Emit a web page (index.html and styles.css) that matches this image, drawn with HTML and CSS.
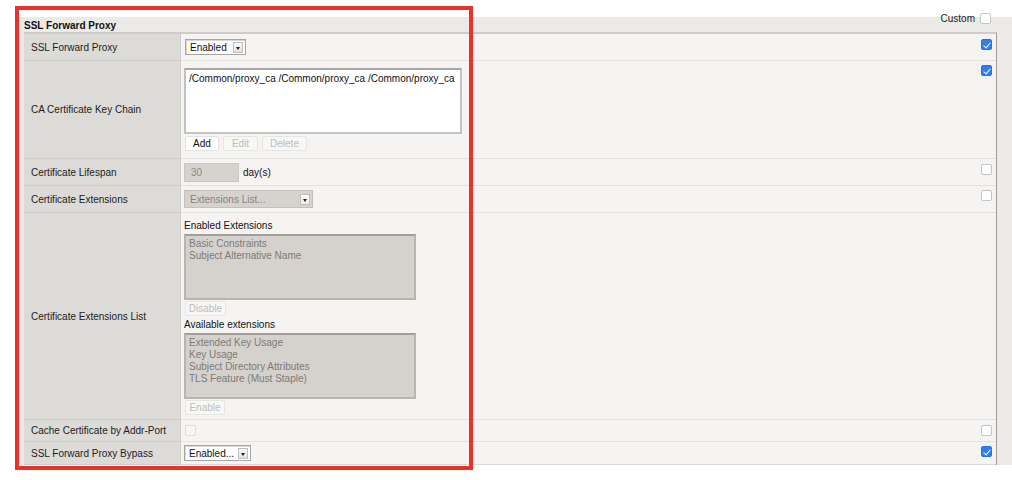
FILE: index.html
```html
<!DOCTYPE html>
<html>
<head>
<meta charset="utf-8">
<link rel="stylesheet" href="styles.css">
</head>
<body>
<div class="page">
  <div class="panel">
    <div class="panel-head">
      <span class="title">SSL Forward Proxy</span>
      <span class="custom">Custom <span class="cb"></span></span>
    </div>
    <div class="table">
      <div class="row r1">
        <div class="label">SSL Forward Proxy</div>
        <div class="value mid"><div class="select w60"><span class="txt">Enabled</span><span class="arrow"></span></div></div>
        <div class="chk"><span class="cb on"></span></div>
      </div>
      <div class="row r2">
        <div class="label">CA Certificate Key Chain</div>
        <div class="value stack pad-chain">
          <div class="textarea">/Common/proxy_ca /Common/proxy_ca /Common/proxy_ca</div>
          <div class="btns">
            <span class="btn b-add">Add</span>
            <span class="btn dis b-edit">Edit</span>
            <span class="btn dis b-del">Delete</span>
          </div>
        </div>
        <div class="chk"><span class="cb on"></span></div>
      </div>
      <div class="row r3">
        <div class="label">Certificate Lifespan</div>
        <div class="value mid"><span class="input dis">30</span><span class="unit">day(s)</span></div>
        <div class="chk"><span class="cb"></span></div>
      </div>
      <div class="row r4">
        <div class="label">Certificate Extensions</div>
        <div class="value mid"><div class="select w128 dis"><span class="txt">Extensions List...</span><span class="arrow"></span></div></div>
        <div class="chk"><span class="cb"></span></div>
      </div>
      <div class="row r5">
        <div class="label">Certificate Extensions List</div>
        <div class="value stack pad-ext">
          <div class="cap">Enabled Extensions</div>
          <div class="listbox">
            <div>Basic Constraints</div>
            <div>Subject Alternative Name</div>
          </div>
          <div class="btns"><span class="btn dis b-dis">Disable</span></div>
          <div class="cap cap2">Available extensions</div>
          <div class="listbox">
            <div>Extended Key Usage</div>
            <div>Key Usage</div>
            <div>Subject Directory Attributes</div>
            <div>TLS Feature (Must Staple)</div>
          </div>
          <div class="btns"><span class="btn dis b-en">Enable</span></div>
        </div>
        <div class="chk"></div>
      </div>
      <div class="row r6">
        <div class="label">Cache Certificate by Addr-Port</div>
        <div class="value mid"><span class="cb dis"></span></div>
        <div class="chk"><span class="cb"></span></div>
      </div>
      <div class="row r7">
        <div class="label">SSL Forward Proxy Bypass</div>
        <div class="value mid"><div class="select w67"><span class="txt">Enabled...</span><span class="arrow"></span></div></div>
        <div class="chk"><span class="cb on"></span></div>
      </div>
    </div>
  </div>
  <div class="frame"></div>
</div>
</body>
</html>
```

FILE: styles.css
```css
* { box-sizing: border-box; }
html, body { margin: 0; padding: 0; background: #ffffff; }
body {
  font-family: "Liberation Sans", Arial, Helvetica, sans-serif;
  font-size: 10px;
  color: #1a1a1a;
}
.page { position: relative; width: 1012px; height: 480px; padding-top: 17px; }
.panel {
  margin-left: 18px;
  background: #ebeae7;
  padding-left: 6px;
}
.panel-head {
  height: 15px;
  display: flex;
  justify-content: space-between;
  align-items: center;
  padding-right: 21px;
}
.title { font-weight: bold; font-size: 10px; color: #111; padding-top: 2px; }
.custom {
  align-self: flex-start;
  margin-top: -4px;
  display: flex;
  align-items: center;
  gap: 5px;
  color: #222;
}
.table {
  width: 973px;
  border-top: 2px solid #cdccc9;
  border-right: 1px solid #9d9c9a;
  background: #f5f4f2;
}
.row {
  display: grid;
  grid-template-columns: 157px 1fr 21px;
  border-bottom: 1px solid #e2e1de;
}
.r1 { height: 27px; }
.r2 { height: 98px; }
.r3 { height: 27px; }
.r4 { height: 27px; }
.r5 { height: 207px; }
.r6 { height: 22px; }
.r7 { height: 23px; border-bottom: 1px solid #dcdbd8; }
.label {
  background: #dddbd7;
  border-right: 1px solid #d0cecb;
  display: flex;
  align-items: center;
  padding-left: 7px;
  color: #1c1c1c;
  margin-bottom: -1px;
  border-bottom: 1px solid #cfcdca;
}
.value { padding-left: 3px; }
.value.mid { display: flex; align-items: center; }
.value.stack { display: flex; flex-direction: column; align-items: flex-start; }
.pad-chain { padding-top: 7px; }
.pad-ext { padding-top: 7px; }
.chk { padding-top: 4px; padding-left: 6px; }
.r1 .chk, .r3 .chk, .r6 .chk { padding-top: 5px; }

.cb {
  display: inline-block;
  width: 11px;
  height: 11px;
  border: 1px solid #c4c4c4;
  border-radius: 2px;
  background: #ffffff;
  position: relative;
}
.cb.on { background: #2e7cf6; border-color: #2a70e0; }
.cb.on::after {
  content: "";
  position: absolute;
  left: 3px;
  top: 1px;
  width: 3px;
  height: 6px;
  border: solid #ffffff;
  border-width: 0 1.3px 1.3px 0;
  transform: rotate(40deg);
}
.cb.dis { border-color: #dedddb; background: #f7f7f6; margin-left: 1px; }

.select {
  height: 16px;
  border: 1px solid #a6a6a6;
  background: #ffffff;
  display: flex;
  align-items: center;
  justify-content: space-between;
  padding-left: 4px;
  padding-right: 2px;
  box-shadow: inset 1px 1px 0 #d8d8d8;
}
.w60 { width: 61px; margin-left: 1px; }
.w67 { width: 67px; }
.w128 { width: 129px; height: 18px; }
.select .txt { color: #111; }
.arrow {
  width: 10px;
  height: 11px;
  border: 1px solid #bdbdbd;
  background: linear-gradient(#fafafa, #e3e3e3);
  position: relative;
}
.arrow::after {
  content: "";
  position: absolute;
  left: 2px;
  top: 4px;
  border-left: 2.5px solid transparent;
  border-right: 2.5px solid transparent;
  border-top: 3px solid #222;
}
.select.dis { background: #d6d3ce; border-color: #c3c0bb; box-shadow: none; padding-left: 5px; }
.select.dis .txt { color: #858380; }
.select.dis .arrow { background: linear-gradient(#ffffff, #ececec); }

.textarea {
  width: 278px;
  height: 66px;
  border: 2px solid #c2c2c2;
  border-top-color: #a5a5a5;
  background: #ffffff;
  padding: 3px 3px;
  color: #111;
}
.btns { display: flex; gap: 4px; margin-top: 2px; margin-left: 1px; }
.btn {
  height: 15px;
  display: flex;
  align-items: center;
  justify-content: center;
  background: #ffffff;
  border: 1px solid #e2e2e0;
  border-radius: 2px;
  color: #111;
}
.btn.dis { color: #bdbdbb; background: #f7f7f6; border-color: #e6e6e4; }
.b-add { width: 34px; }
.b-edit { width: 35px; }
.b-del { width: 45px; }
.b-dis { width: 41px; }
.b-en { width: 40px; }

.input {
  width: 55px;
  height: 19px;
  display: flex;
  align-items: center;
  padding-left: 6px;
  background: #d6d3ce;
  border: 1px solid #cbc8c3;
}
.input.dis { color: #8a8885; }
.unit { margin-left: 4px; color: #111; }

.cap { color: #111; line-height: 12px; }
.listbox {
  width: 232px;
  height: 66px;
  margin-top: 2px;
  background: #d5d1cc;
  border: 2px solid #b8b5b0;
  border-top-color: #a29f9a;
  padding: 2px 3px;
  color: #7d7b78;
  line-height: 12px;
}
.r5 .btns { margin-top: 1px; }
.cap2 { margin-top: 3px; }

.frame {
  position: absolute;
  left: 15px;
  top: 6px;
  width: 458px;
  height: 464px;
  border: 4px solid #e8322a;
  pointer-events: none;
}
```
